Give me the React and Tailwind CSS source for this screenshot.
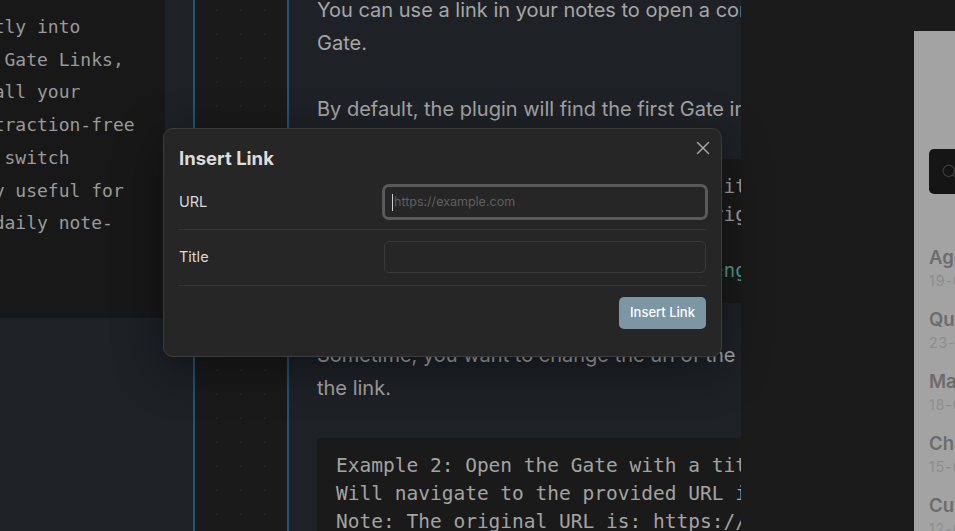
import { X, Search } from 'lucide-react';

const MONO = "font-['DejaVu_Sans_Mono',monospace]";
const SANS = "font-['Inter','Noto_Sans',sans-serif]";

// left editor lines, the first chars are clipped by the panel edge
const LEFT_LINES = [
  'ectly into',
  'th Gate Links,',
  'p all your',
  'istraction-free',
  'on switch',
  'lly useful for',
  'a daily note-',
];

const NOTES = [
  { title: 'Agenda review', date: '19-03-2024' },
  { title: 'Quarterly planning', date: '23-02-2024' },
  { title: 'Marketing ideas', date: '18-02-2024' },
  { title: 'Changelog draft', date: '15-02-2024' },
  { title: 'Customer feedback', date: '12-02-2024' },
];

const InsertLinkModal = () => (
  <div
    className={`absolute left-[163px] top-[128px] flex w-[559px] flex-col rounded-[10px] border border-[#3b3b3b] bg-[#262626] px-[15px] pb-[27px] pt-[18px] shadow-[0_12px_48px_rgba(0,0,0,0.45)] ${SANS}`}
  >
    <button className="absolute right-[7px] top-[8px] text-[#a6a6a6]">
      <X size={22} strokeWidth={1.6} />
    </button>

    <h2 className="mb-[5px] text-[18.5px] font-bold leading-[22px] text-[#dcdcdc]">Insert Link</h2>

    {/* URL */}
    <div className="flex items-center justify-between border-b border-[#363636] pb-[11px] pt-3">
      <label className="text-[14.5px] text-[#dadada]">URL</label>
      <div className="flex h-8 w-[322px] items-center rounded-[5px] bg-[#262626] px-[8px] outline outline-[3px] outline-offset-[-1px] outline-[#5a5a5a]">
        <span className="mr-px h-[17px] w-px bg-[#d0d0d0]" />
        <span className="text-[12.5px] text-[#5f5f5f]">https://example.com</span>
      </div>
    </div>

    {/* Title */}
    <div className="flex items-center justify-between border-b border-[#363636] pb-3 pt-[11px]">
      <label className="text-[14.5px] text-[#dadada]">Title</label>
      <div className="h-8 w-[322px] rounded-[5px] border border-[#393939] bg-[#262626]" />
    </div>

    <div className="flex justify-end pt-[11px]">
      <button className="h-8 w-[87px] rounded-[5px] bg-[#7c96a3] text-[13px] font-medium text-white">
        Insert Link
      </button>
    </div>
  </div>
);

export default function App() {
  return (
    <div className={`relative flex h-[531px] w-[955px] overflow-hidden bg-[#1b1b1b] ${SANS}`}>
      {/* left editor */}
      <div className="w-[193px] shrink-0 bg-[#1d2227]">
        <div className="h-[318px] w-[165px] overflow-hidden bg-[#181818] pt-[11px]">
          <div className={`ml-[-28px] whitespace-pre text-[18px] leading-[32.7px] text-[#9a9a9a] ${MONO}`}>
            {LEFT_LINES.map((line) => (
              <div key={line}>{line}</div>
            ))}
          </div>
        </div>
      </div>

      {/* canvas strip */}
      <div className="w-[96px] shrink-0 border-x-2 border-[#1b5779] bg-[#1a1a1a] bg-[radial-gradient(circle,#262626_1px,transparent_1.5px)] bg-[size:24px_24px] bg-[position:10px_-2px]" />

      {/* note view */}
      <div className="w-[452px] shrink-0 overflow-hidden bg-[#1e2227] pl-[28px] text-[20px] leading-[33px] text-[#a6a6a6]">
        <div className="-mt-[6px] w-[700px] whitespace-nowrap">
          <p className="mb-[33px]">
            You can use a link in your notes to open a content in a
            <br />
            Gate.
          </p>
          <p>
            By default, the plugin will find the first Gate in the workspace
            <br />
            with the same URL.
          </p>
          <pre className={`mb-[36px] rounded bg-[#1a1a1a] pb-[18px] pl-[19px] pt-[14px] text-[19.5px] leading-[28px] text-[#a3a3a3] ${MONO}`}>
            <div>Example 1: Open the Gate with a title</div>
            <div>It will open the Gate with the original URL</div>
            <div> </div>
            <div className="text-[#4e9d89]">[Blog](gate-https://example.com/engine)</div>
          </pre>
          <p className="mb-[33px]">
            Sometime, you want to change the url of the Gate when you click on
            <br />
            the link.
          </p>
          <pre className={`rounded bg-[#1a1a1a] pb-[18px] pl-[19px] pt-[14px] text-[19.5px] leading-[28px] text-[#a3a3a3] ${MONO}`}>
            <div>Example 2: Open the Gate with a title and a new URL</div>
            <div>Will navigate to the provided URL in the Gate</div>
            <div>Note: The original URL is: https://example.com</div>
          </pre>
        </div>
      </div>

      {/* right side */}
      <div className="flex flex-1 justify-end pt-[31px]">
        <div className="w-[41px] overflow-hidden bg-[#a3a3a3] pl-[15px]">
          <div className="mt-[118px] flex h-[45px] w-[200px] items-center rounded-[5px] bg-[#151515] pl-[12px] text-[#3d3d3d]">
            <Search size={17} strokeWidth={1.6} />
          </div>
          <div className="mt-[51px] w-[200px]">
            {NOTES.map((n) => (
              <div key={n.title} className="mb-[16px]">
                <div className="whitespace-nowrap text-[18.5px] font-semibold leading-[24px] text-[#6c6c6c]">
                  {n.title}
                </div>
                <div className="mt-[2px] text-[14px] leading-[20px] tracking-[1px] text-[#8d8d8d]">{n.date}</div>
              </div>
            ))}
          </div>
        </div>
      </div>

      <InsertLinkModal />
    </div>
  );
}
